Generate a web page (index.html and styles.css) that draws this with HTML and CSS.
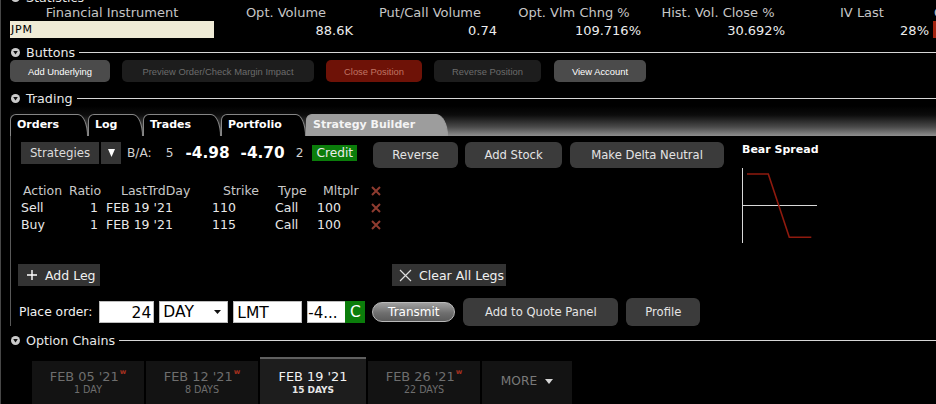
FILE: index.html
```html
<!DOCTYPE html>
<html>
<head>
<meta charset="utf-8">
<link rel="stylesheet" href="styles.css">
</head>
<body>
<div class="app">
  <div class="sec-head sec-first">
    <svg class="ico" viewBox="0 0 9 9"><circle cx="4.5" cy="4.5" r="4.5" fill="#cacaca"/><path d="M2.2 3.1h4.6L4.5 6.5z" fill="#111"/></svg>
    <span>Statistics</span><i class="rule"></i>
  </div>
  <div class="stats-head">
    <span>Financial Instrument</span>
    <span>Opt. Volume</span>
    <span>Put/Call Volume</span>
    <span>Opt. Vlm Chng %</span>
    <span>Hist. Vol. Close %</span>
    <span>IV Last</span>
    <span class="cut">Chg</span>
  </div>
  <div class="stats-vals">
    <span class="sym">JPM</span>
    <span class="v">88.6K</span>
    <span class="v">0.74</span>
    <span class="v">109.716%</span>
    <span class="v">30.692%</span>
    <span class="v">28%</span>
    <span class="flag"></span>
  </div>

  <div class="sec-head sec-buttons">
    <svg class="ico" viewBox="0 0 9 9"><circle cx="4.5" cy="4.5" r="4.5" fill="#cacaca"/><path d="M2.2 3.1h4.6L4.5 6.5z" fill="#111"/></svg>
    <span>Buttons</span><i class="rule"></i>
  </div>
  <div class="btn-row">
    <button class="sbtn on b-add">Add Underlying</button>
    <button class="sbtn off b-prev">Preview Order/Check Margin Impact</button>
    <button class="sbtn red b-close">Close Position</button>
    <button class="sbtn off b-rev">Reverse Position</button>
    <button class="sbtn on b-view">View Account</button>
  </div>

  <div class="sec-head sec-trading">
    <svg class="ico" viewBox="0 0 9 9"><circle cx="4.5" cy="4.5" r="4.5" fill="#cacaca"/><path d="M2.2 3.1h4.6L4.5 6.5z" fill="#111"/></svg>
    <span>Trading</span><i class="rule"></i>
  </div>
  <div class="tabstrip">
    <div class="tab t-orders">Orders</div>
    <div class="tab t-log">Log</div>
    <div class="tab t-trades">Trades</div>
    <div class="tab t-port">Portfolio</div>
    <div class="tab t-sb active">Strategy Builder</div>
  </div>
  <div class="panel">
    <div class="sb-main">
      <div class="sb-top">
        <div class="strat">Strategies</div>
        <div class="strat-arrow"><svg width="7" height="8" viewBox="0 0 7 8"><path d="M0 0h7L3.5 8z" fill="#fff"/></svg></div>
        <div class="quote">
          <span class="q-lbl">B/A:</span>
          <span class="q-size">5</span>
          <span class="q-px">-4.98</span>
          <span class="q-px q-px2">-4.70</span>
          <span class="q-size2">2</span>
          <span class="credit">Credit</span>
        </div>
        <button class="sb-btn b-reverse">Reverse</button>
        <button class="sb-btn b-stock">Add Stock</button>
        <button class="sb-btn b-delta">Make Delta Neutral</button>
      </div>
      <div class="legs">
        <div class="lrow hd">
          <span>Action</span><span>Ratio</span><span>LastTrdDay</span><span>Strike</span><span>Type</span><span>Mltplr</span>
          <span class="x"><svg width="10" height="10" viewBox="0 0 10 10"><path d="M1 1l8 8M9 1l-8 8" stroke="#8e3b2f" stroke-width="2"/></svg></span>
        </div>
        <div class="lrow">
          <span>Sell</span><span>1</span><span>FEB 19 '21</span><span>110</span><span>Call</span><span>100</span>
          <span class="x"><svg width="10" height="10" viewBox="0 0 10 10"><path d="M1 1l8 8M9 1l-8 8" stroke="#8e3b2f" stroke-width="2"/></svg></span>
        </div>
        <div class="lrow">
          <span>Buy</span><span>1</span><span>FEB 19 '21</span><span>115</span><span>Call</span><span>100</span>
          <span class="x"><svg width="10" height="10" viewBox="0 0 10 10"><path d="M1 1l8 8M9 1l-8 8" stroke="#8e3b2f" stroke-width="2"/></svg></span>
        </div>
      </div>
      <div class="leg-acts">
        <div class="leg-btn add-leg">
          <svg width="10" height="10" viewBox="0 0 10 10"><path d="M5 0v10M0 5h10" stroke="#fff" stroke-width="1.4"/></svg>
          <span>Add Leg</span>
        </div>
        <div class="leg-btn clear-legs">
          <svg width="13" height="13" viewBox="0 0 13 13"><path d="M1 1l11 11M12 1L1 12" stroke="#ddd" stroke-width="1.2"/></svg>
          <span>Clear All Legs</span>
        </div>
      </div>
      <div class="order">
        <span class="o-lbl">Place order:</span>
        <span class="fld f-qty">24</span>
        <span class="fld f-tif"><span>DAY</span><svg width="7" height="4" viewBox="0 0 7 4"><path d="M0 0h7L3.5 4z" fill="#111"/></svg></span>
        <span class="fld f-type">LMT</span>
        <span class="fld f-px">-4...</span>
        <span class="f-c">C</span>
        <button class="transmit">Transmit</button>
        <button class="sb-btn b-quote">Add to Quote Panel</button>
        <button class="sb-btn b-profile">Profile</button>
      </div>
    </div>
    <div class="sb-side">
      <div class="side-title">Bear Spread</div>
      <svg class="payoff" width="76" height="76" viewBox="0 0 76 76">
        <path d="M0.5 0v75" stroke="#d8d8d8" stroke-width="1"/>
        <path d="M0 37.5h75" stroke="#d8d8d8" stroke-width="1"/>
        <path d="M5 6h21.3l21 63.3h22" stroke="#8f1a0e" stroke-width="1.6" fill="none"/>
      </svg>
    </div>
  </div>

  <div class="sec-head sec-chains">
    <svg class="ico" viewBox="0 0 9 9"><circle cx="4.5" cy="4.5" r="4.5" fill="#cacaca"/><path d="M2.2 3.1h4.6L4.5 6.5z" fill="#111"/></svg>
    <span>Option Chains</span><i class="rule"></i>
  </div>
  <div class="exp">
    <div class="exp-tab"><div class="exp-date">FEB 05 '21<sup class="w">w</sup></div><div class="exp-days">1 DAY</div></div>
    <div class="exp-tab"><div class="exp-date">FEB 12 '21<sup class="w">w</sup></div><div class="exp-days">8 DAYS</div></div>
    <div class="exp-tab active"><div class="exp-date">FEB 19 '21</div><div class="exp-days">15 DAYS</div></div>
    <div class="exp-tab"><div class="exp-date">FEB 26 '21<sup class="w">w</sup></div><div class="exp-days">22 DAYS</div></div>
    <div class="exp-tab more"><span>MORE</span><svg width="8" height="5" viewBox="0 0 8 5"><path d="M0 0h8L4 5z" fill="#d6d6d6"/></svg></div>
  </div>
</div>
</body>
</html>
```
FILE: styles.css
```css
html, body {
  margin: 0;
  padding: 0;
  background: #000;
}
body {
  width: 936px;
  height: 404px;
  overflow: hidden;
  font-family: "DejaVu Sans", "Noto Sans", sans-serif;
  color: #ddd;
}
button {
  border: 0;
  padding: 0;
  margin: 0;
  font-family: "DejaVu Sans", sans-serif;
  cursor: default;
}
.app {
  height: 404px;
  overflow: hidden;
  border-left: 1px solid #474747;
  box-sizing: border-box;
}

/* section headers */
.sec-head {
  display: flex;
  align-items: center;
  height: 15px;
  line-height: 15px;
  padding-left: 10px;
  font-size: 12.7px;
  color: #e8e8e8;
  white-space: nowrap;
}
.sec-head .ico {
  width: 9px;
  height: 9px;
  flex: none;
  margin-right: 6px;
}
.sec-head .rule {
  flex: 1;
  height: 1px;
  background: #d6d6d6;
  margin-left: 4px;
}
.sec-first { margin-top: -10px; }
.sec-buttons { margin-top: 7px; }
.sec-trading { margin-top: 9px; }
.sec-chains { margin-top: 7px; }

/* statistics */
.stats-head, .stats-vals {
  display: grid;
  grid-template-columns: 204px repeat(5, 144px) 1fr;
  margin-left: 9px;
  white-space: nowrap;
}
.stats-head {
  height: 16px;
  line-height: 16px;
  font-size: 13px;
  color: #c6c6c6;
  text-align: center;
}
.stats-head .cut { text-align: left; overflow: hidden; }
.stats-vals {
  height: 17px;
  font-size: 13px;
  color: #ececec;
}
.stats-vals .v {
  text-align: right;
  padding-right: 5px;
  line-height: 19px;
}
.stats-vals .sym {
  background: #efebd6;
  color: #000;
  font-size: 11px;
  line-height: 17px;
  height: 17px;
  padding-left: 1px;
  letter-spacing: 0.8px;
}
.stats-vals .flag {
  background: #a4230f;
  height: 17px;
  margin-left: -1px;
}

/* buttons bar */
.btn-row {
  display: flex;
  gap: 12px;
  margin-left: 9px;
  height: 22px;
}
.sbtn {
  height: 22px;
  border-radius: 5px;
  font-family: "Liberation Sans", Arial, sans-serif;
  font-size: 9.4px;
  white-space: nowrap;
  text-align: center;
}
.sbtn.on { background: #4b4b4b; color: #fff; }
.sbtn.off { background: #1d1d1d; color: #6c6c6c; }
.sbtn.red { background: #6e1207; color: #c07464; }
.b-add { width: 100px; }
.b-prev { width: 192px; }
.b-close { width: 96px; }
.b-rev { width: 107px; }
.b-view { width: 92px; margin-left: 1px; }

/* tabs */
.tabstrip {
  display: flex;
  align-items: flex-end;
  height: 30px;
  margin-left: 9px;
  background: linear-gradient(#000 0%, #0c0c0c 30%, #4a4a4a 70%, #8f8f8f 100%);
}
.tab {
  height: 22px;
  box-sizing: border-box;
  border: 1px solid #868686;
  border-bottom: 0;
  border-radius: 6px 10px 0 0 / 6px 22px 0 0;
  background: #000;
  color: #fff;
  font-weight: bold;
  font-size: 11px;
  line-height: 19px;
  padding-left: 6px;
  white-space: nowrap;
}
.t-orders { width: 78px; }
.t-log { width: 55px; }
.t-trades { width: 78px; }
.t-port { width: 85px; }
.t-sb { width: 142px; }
.tab.active {
  background: #9d9d9d;
  border-color: #9d9d9d;
  color: #f4f4f4;
  border-radius: 6px 12px 0 0 / 6px 22px 0 0;
}

/* strategy builder panel */
.panel {
  margin-left: 9px;
  height: 190px;
  box-sizing: border-box;
  border-left: 1px solid #595959;
  padding: 6px 0 0 7px;
  display: grid;
  grid-template-columns: 724px 1fr;
}
.sb-top {
  display: flex;
  align-items: flex-start;
  height: 26px;
}
.strat {
  margin-left: 3px;
  width: 78px;
  height: 22px;
  line-height: 22px;
  background: #353535;
  color: #dcdcdc;
  font-size: 11.8px;
  text-align: center;
}
.strat-arrow {
  margin-left: 2px;
  width: 20px;
  height: 22px;
  background: #353535;
  display: flex;
  align-items: center;
  justify-content: center;
}
.quote {
  display: flex;
  align-items: center;
  height: 22px;
  margin-left: 6px;
  font-size: 12.2px;
  color: #d0d0d0;
  white-space: nowrap;
}
.q-size { margin-left: 14px; }
.q-px {
  margin-left: 12px;
  font-weight: bold;
  font-size: 15.3px;
  color: #fff;
}
.q-px2 { margin-left: 11px; }
.q-size2 { margin-left: 11px; }
.credit {
  margin-left: 9px;
  height: 16px;
  line-height: 16px;
  padding: 0 4px;
  background: #0b7d0b;
  color: #ececec;
}
.sb-btn {
  height: 26px;
  border-radius: 6px;
  background: #3b3b3b;
  color: #e4e4e4;
  font-size: 11.6px;
  white-space: nowrap;
  text-align: center;
}
.b-reverse { margin-left: 16px; width: 85px; }
.b-stock { margin-left: 7px; width: 97px; }
.b-delta { margin-left: 8px; width: 154px; }

.legs {
  margin-top: 14px;
  font-size: 12.5px;
}
.lrow {
  display: grid;
  grid-template-columns: 48px 38px 106px 60px 44px 50px 26px;
  height: 17px;
  line-height: 17px;
  color: #e8e8e8;
  white-space: nowrap;
}
.lrow.hd { color: #c9c9c9; }
.lrow > :nth-child(1) { padding-left: 3px; }
.lrow > :nth-child(2) { text-align: right; padding-right: 6px; }
.lrow > :nth-child(3) { padding-left: 2px; }
.lrow > :nth-child(4) { padding-left: 2px; }
.lrow > :nth-child(5) { padding-left: 5px; }
.lrow > :nth-child(6) { padding-left: 3px; }
.lrow.hd > :nth-child(1) { padding-left: 5px; }
.lrow.hd > :nth-child(2) { text-align: left; padding-left: 3px; padding-right: 0; }
.lrow.hd > :nth-child(3) { padding-left: 17px; }
.lrow.hd > :nth-child(4) { padding-left: 13px; }
.lrow.hd > :nth-child(5) { padding-left: 8px; }
.lrow.hd > :nth-child(6) { padding-left: 9px; }
.lrow .x {
  display: flex;
  align-items: center;
  padding-left: 7px;
}

.leg-acts {
  display: flex;
  height: 22px;
  margin-top: 31px;
}
.leg-btn {
  display: flex;
  align-items: center;
  height: 22px;
  box-sizing: border-box;
  background: #333;
  color: #f0f0f0;
  font-size: 12.5px;
  white-space: nowrap;
}
.add-leg {
  width: 82px;
  padding-left: 9px;
  gap: 8px;
}
.clear-legs {
  width: 114px;
  margin-left: 292px;
  padding-left: 7px;
  gap: 7px;
}

.order {
  display: flex;
  align-items: center;
  height: 28px;
  margin-top: 12px;
  white-space: nowrap;
}
.o-lbl {
  margin-left: 1px;
  font-size: 12.3px;
  color: #f2f2f2;
}
.fld {
  height: 22px;
  line-height: 22px;
  box-sizing: border-box;
  background: #fff;
  border: 1px solid #bdbdbd;
  color: #000;
  font-size: 15.5px;
  overflow: hidden;
}
.f-qty { width: 55px; margin-left: 7px; text-align: right; padding-right: 2px; }
.f-tif {
  width: 69px;
  margin-left: 5px;
  padding: 0 6px 0 3px;
  display: flex;
  align-items: center;
  justify-content: space-between;
}
.f-type { width: 69px; margin-left: 5px; padding-left: 3px; }
.f-px { width: 38px; margin-left: 5px; padding-left: 0; border-right: 0; font-size: 15px; }
.f-c {
  width: 20px;
  height: 22px;
  line-height: 22px;
  background: #0b7d0b;
  color: #fff;
  font-size: 15.5px;
  text-align: center;
}
.transmit {
  margin-left: 7px;
  width: 83px;
  height: 20px;
  box-sizing: border-box;
  border-radius: 10px;
  border: 1px solid #b9b9b9;
  background: linear-gradient(#a0a0a0, #6f6f6f 55%, #5a5a5a);
  color: #fff;
  font-size: 12px;
}
.b-quote { margin-left: 8px; width: 155px; height: 28px; }
.b-profile { margin-left: 8px; width: 74px; height: 28px; }

.sb-side { padding-top: 1px; }
.side-title {
  font-weight: bold;
  font-size: 11px;
  line-height: 14px;
  color: #fff;
  white-space: nowrap;
}
.payoff {
  display: block;
  margin-top: 11px;
}

/* option chain expiries */
.exp {
  display: flex;
  align-items: flex-start;
  gap: 2px;
  margin: 9px 0 0 31px;
}
.exp-tab {
  width: 112px;
  height: 48px;
  margin-top: 4px;
  box-sizing: border-box;
  padding-top: 8px;
  background: #131313;
  text-align: center;
  color: #6e6e6e;
  white-space: nowrap;
}
.exp-date {
  font-size: 12.9px;
  line-height: 15px;
}
.exp-days {
  font-size: 9.6px;
  line-height: 12px;
}
.exp-tab .w {
  font-size: 7px;
  line-height: 7px;
  vertical-align: top;
  color: #a3301f;
  font-weight: bold;
  margin-left: 1px;
}
.exp-tab.active {
  width: 106px;
  height: 52px;
  margin-top: 0;
  padding-top: 10px;
  background: #1d1d1d;
  border-top: 2px solid #5f5f5f;
  color: #f2f2f2;
}
.exp-tab.active .exp-days {
  font-weight: bold;
  font-size: 9px;
  color: #e6e6e6;
}
.exp-tab.more {
  width: 90px;
  padding-top: 13px;
  display: flex;
  align-items: flex-start;
  justify-content: center;
  gap: 8px;
  font-size: 12.2px;
  line-height: 15px;
  color: #7a7a7a;
}
.exp-tab.more svg { margin-top: 5px; }
```
